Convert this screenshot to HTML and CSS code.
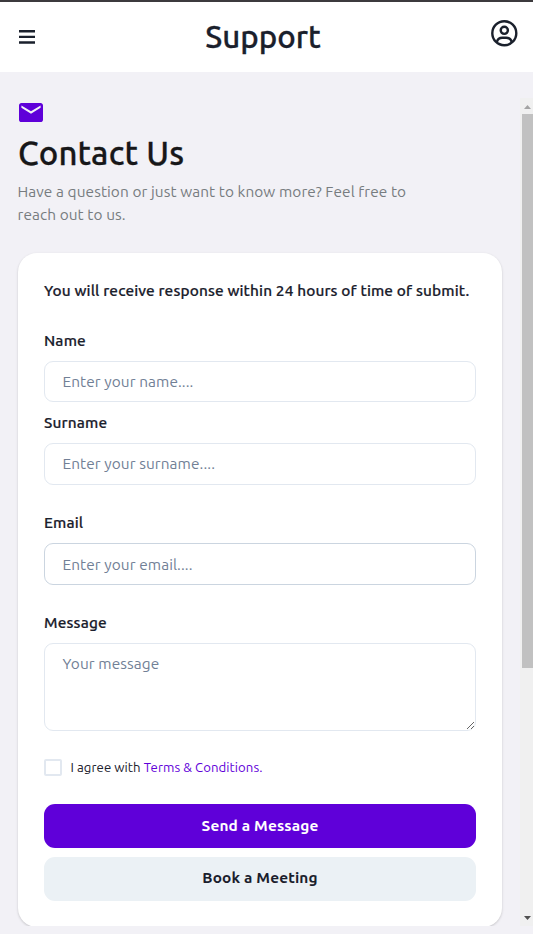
FILE: index.html
```html
<!DOCTYPE html>
<html lang="en">
<head>
<meta charset="utf-8">
<title>Support</title>
<link rel="stylesheet" href="styles.css">
</head>
<body>
<header class="topbar">
  <svg class="menu" viewBox="0 0 16 14" width="16" height="14"><path d="M0 1.300h16M0 6.900h16M0 12.500h16" stroke="#1a202c" stroke-width="2.4"/></svg>
  <h1 class="title">Support</h1>
  <svg class="account" viewBox="0 0 28 28" width="28" height="28" fill="none" stroke="#1a202c" stroke-width="2.4"><circle cx="14.300" cy="14.200" r="12"/><circle cx="14.300" cy="11.300" r="3.600"/><path d="M6.900 23C7.700 20 9.700 18.800 12.300 18.800h4c2.600 0 4.600 1.200 5.400 4.200"/></svg>
</header>
<div class="viewport">
  <main class="content">
    <svg class="mail" viewBox="2 4 20 16" width="24" height="19" preserveAspectRatio="none"><path fill="#5f00d9" d="M20 4H4c-1.100 0-2 .9-2 2v12c0 1.100.9 2 2 2h16c1.100 0 2-.9 2-2V6c0-1.100-.9-2-2-2zm0 4-8 5-8-5V6l8 5 8-5v2z"/></svg>
    <h2 class="heading">Contact Us</h2>
    <p class="intro">Have a question or just want to know more? Feel free to<br>reach out to us.</p>
    <form class="card">
      <p class="notice">You will receive response within 24 hours of time of submit.</p>
      <label class="label" for="name">Name</label>
      <input class="field field-name" id="name" placeholder="Enter your name....">
      <label class="label" for="surname">Surname</label>
      <input class="field field-surname" id="surname" placeholder="Enter your surname....">
      <label class="label label-spaced" for="email">Email</label>
      <input class="field field-hover" id="email" placeholder="Enter your email....">
      <label class="label label-spaced" for="message">Message</label>
      <textarea class="field area" id="message" placeholder="Your message"></textarea>
      <div class="agree"><span class="box"></span><span class="terms">I agree with <a>Terms &amp; Conditions.</a></span></div>
      <button class="button primary" type="button"><span>Send a Message</span></button>
      <button class="button secondary" type="button"><span>Book a Meeting</span></button>
    </form>
  </main>
  <div class="scrollbar">
    <svg class="arrow" viewBox="0 0 13 16" width="13" height="16"><path d="M4 11h7L7.500 7z" fill="#a3a3a3"/></svg>
    <div class="thumb"></div>
    <svg class="arrow" viewBox="0 0 13 16" width="13" height="16"><path d="M4 6h7l-3.500 4z" fill="#505050"/></svg>
  </div>
</div>
</body>
</html>
```
FILE: styles.css
```css
* { box-sizing: border-box; }
body {
  margin: 0;
  height: 934px;
  overflow: hidden;
  background: #f2f1f6;
  color: #1a202c;
  font-family: Ubuntu, "Noto Sans", sans-serif;
  font-size: 15.4px;
}
h1, h2, p { margin: 0; }
svg { display: block; }
.topbar {
  display: flex;
  justify-content: space-between;
  height: 72px;
  padding: 0 15px 0 19px;
  background: #fff;
  border-top: 2px solid #3c3a3d;
}
.menu { margin-top: 28px; }
.title { margin: 13px 0 0 1px; font-size: 31.3px; line-height: 44px; font-weight: 500; -webkit-text-stroke: .3px; }
.account { margin-top: 17px; }
.viewport { display: flex; height: 828px; margin-top: 26px; overflow: hidden; }
.content { width: 520px; padding: 5px 18px 0; }
.mail { margin-left: 1px; }
.heading { margin-top: 8px; color: #171719; font-size: 33px; line-height: 46px; font-weight: 500; letter-spacing: .2px; white-space: nowrap; -webkit-text-stroke: .3px; }
.intro { margin: 4px 0 0 -.5px; color: #777c80; line-height: 23px; letter-spacing: .08px; white-space: nowrap; }
.card {
  width: 484px;
  height: 674px;
  margin-top: 27px;
  padding: 26px;
  background: #fff;
  border-radius: 19px;
  box-shadow: 0 1px 3px rgba(0,0,0,.13), 0 1px 2px rgba(0,0,0,.06);
}
.notice { line-height: 24px; font-weight: 500; letter-spacing: .12px; white-space: nowrap; -webkit-text-stroke: .2px; }
.label { display: block; height: 24px; margin: 8px 0 9px; line-height: 25px; font-weight: 500; letter-spacing: .16px; -webkit-text-stroke: .2px; }
.notice + .label { margin-top: 25px; }
.field {
  display: block;
  width: 432px;
  height: 42px;
  padding: 0 17.5px;
  border: 1px solid #e2e8f0;
  border-radius: 9px;
  outline: none;
  background: #fff;
  font: inherit;
  letter-spacing: .08px;
}
.field-name { height: 41px; }
.field-surname { padding-bottom: 2px; }
.field::placeholder { color: #718096; opacity: 1; }
.field-hover { border-color: #cbd5e0; }
.label-spaced { margin-top: 25px; }
.area { height: 88px; padding-top: 8px; line-height: 23px; resize: vertical; }
.agree { display: flex; align-items: center; gap: 8.5px; height: 20px; margin: 26px 0 27px; font-size: 13.2px; letter-spacing: .06px; white-space: nowrap; }
.box { width: 18px; height: 17px; border: 2px solid #e2e8f0; border-radius: 2px; }
.agree a { color: #5f00d9; }
.button { display: flex; align-items: center; justify-content: center; width: 432px; height: 44px; margin: 0; padding: 0; border: 0; border-radius: 11px; font: inherit; font-weight: 700; letter-spacing: .14px; }
.primary { background: #5f00d9; color: #fff; }
.primary span { margin-top: -1px; }
.secondary { margin-top: 9px; background: #ebf1f5; color: #1a202c; }
.secondary span { margin-top: -3px; }
.scrollbar { width: 13px; background: #f0f0f0; display: flex; flex-direction: column; }
.thumb { width: 11px; height: 554px; margin: 0 0 auto 2px; background: #c1c1c1; }
```
